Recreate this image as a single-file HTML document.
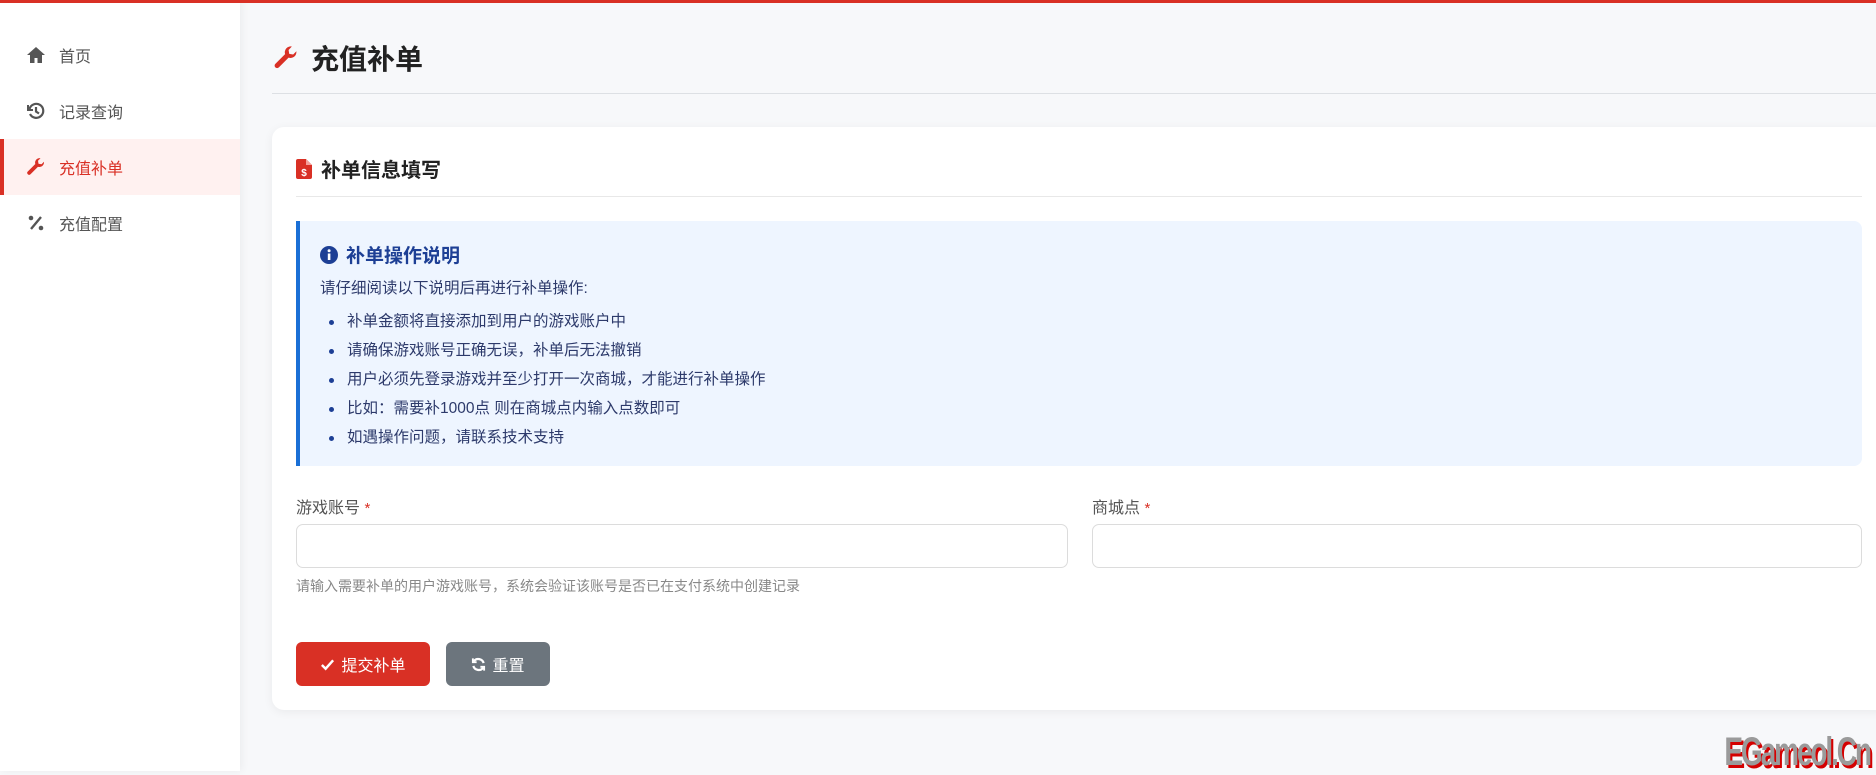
<!DOCTYPE html>
<html><head><meta charset="utf-8">
<style>
*{box-sizing:border-box;margin:0;padding:0}
body{width:1876px;height:771px;overflow:hidden;background:#f7f8fa;font-family:"Liberation Sans","Noto Sans CJK SC",sans-serif;position:relative}
.topbar{position:absolute;left:0;top:0;width:1876px;height:3px;background:#d93025;z-index:5}
.side{position:absolute;left:0;top:0;width:240px;height:771px;background:#fff;box-shadow:2px 0 8px rgba(0,0,0,.05);padding-top:27px}
.nav{height:56px;display:flex;align-items:center;padding-left:26px;font-size:16px;color:#555;position:relative}
.nav svg{width:20px;height:20px;margin-right:13px}
.nav.active{background:#fff1f0;color:#d93025}
.nav.active:before{content:"";position:absolute;left:0;top:0;bottom:0;width:4px;background:#d93025}
.title{position:absolute;left:273px;top:38px;display:flex;align-items:center;font-size:28px;font-weight:bold;color:#222}
.title svg{width:26px;height:26px;margin-right:12px}
.hr{position:absolute;left:272px;right:0;top:93px;height:1px;background:#dde0e4}
.card{position:absolute;left:272px;top:127px;width:1620px;height:583px;background:#fff;border-radius:12px;box-shadow:0 2px 10px rgba(0,0,0,.06)}
.ch{position:absolute;left:24px;top:27px;display:flex;align-items:center;font-size:20px;font-weight:bold;color:#222}
.ch svg{width:16px;height:20px;margin-right:9px}
.cdiv{position:absolute;left:24px;width:1566px;top:69px;height:1px;background:#e8e8e8}
.alert{position:absolute;left:24px;top:94px;width:1566px;height:245px;background:#eef5ff;border-left:4px solid #1a6fd6;border-radius:0 8px 8px 0}
.at{position:absolute;left:20px;top:20px;display:flex;align-items:center;font-size:19px;font-weight:bold;color:#1d3f95}
.at svg{width:18px;height:18px;margin-right:8px}
.intro{position:absolute;left:20px;top:55px;font-size:15.5px;color:#2d3a6b}
.alert ul{position:absolute;left:28px;top:86px;list-style:none}
.alert li{font-size:15.5px;color:#2d3a6b;height:29px;line-height:29px;position:relative;padding-left:19px}
.alert li:before{content:"";position:absolute;left:1px;top:13px;width:5px;height:5px;border-radius:50%;background:#1d3f95}
.lbl{position:absolute;top:367px;font-size:16px;color:#555}
.lbl b{color:#d93025;font-weight:normal;font-size:15px}
.inp{position:absolute;top:397px;height:44px;border:1px solid #dcdcdc;border-radius:7px;background:#fff}
.help{position:absolute;left:24px;top:449px;font-size:14px;color:#888}
.btn{position:absolute;top:515px;height:44px;border-radius:6px;color:#fff;font-size:16px;display:flex;align-items:center;justify-content:center}
.btn svg{width:15px;height:15px;margin-right:6px}
.wm{position:absolute;right:6px;bottom:-4px;font-family:"Liberation Sans Narrow","Liberation Sans",sans-serif;font-weight:bold;font-size:40px;letter-spacing:-3px;color:#9a9a9a;text-shadow:3px 3px 0 #d40000;transform:scaleX(.7);transform-origin:right bottom;white-space:nowrap}
</style></head><body>
<div class="topbar"></div>
<div class="side">
 <div class="nav"><svg viewBox="0 0 20 20"><path d="M10 2 1 10h3v8h4.5v-5h3v5H16v-8h3z" fill="#555"/></svg>首页</div>
 <div class="nav"><svg viewBox="0 0 20 20" fill="none" stroke="#555" stroke-width="2.2"><path d="M3.5 8A7 7 0 1 1 4 13"/><path d="M2 4v5h5" stroke-width="2" fill="none"/><path d="M10 6v4.5l3 2"/></svg>记录查询</div>
 <div class="nav active"><svg viewBox="0 0 20 20"><path d="M18 5.5a4.5 4.5 0 0 1-6 4.2L4.5 17.2a1.9 1.9 0 0 1-2.7-2.7L9.3 7A4.5 4.5 0 0 1 14.5 1.2L12 3.8l.5 3 3 .5 2.5-2.5z" fill="#d93025"/></svg>充值补单</div>
 <div class="nav"><svg viewBox="0 0 20 20"><circle cx="5" cy="5" r="2.3" fill="#555"/><circle cx="15" cy="15" r="2.3" fill="#555"/><path d="M15 4 5 16" stroke="#555" stroke-width="2.4"/></svg>充值配置</div>
</div>
<div class="title"><svg viewBox="0 0 20 20"><path d="M18 5.5a4.5 4.5 0 0 1-6 4.2L4.5 17.2a1.9 1.9 0 0 1-2.7-2.7L9.3 7A4.5 4.5 0 0 1 14.5 1.2L12 3.8l.5 3 3 .5 2.5-2.5z" fill="#d93025"/></svg>充值补单</div>
<div class="hr"></div>
<div class="card">
 <div class="ch"><svg viewBox="0 0 16 20"><path d="M0 2a2 2 0 0 1 2-2h8l6 6v12a2 2 0 0 1-2 2H2a2 2 0 0 1-2-2z" fill="#d93025"/><path d="M10 0v6h6" fill="#f3a09a"/><text x="8" y="17" font-size="10" fill="#fff" text-anchor="middle" font-weight="bold" font-family="Liberation Sans">$</text></svg>补单信息填写</div>
 <div class="cdiv"></div>
 <div class="alert">
  <div class="at"><svg viewBox="0 0 18 18"><circle cx="9" cy="9" r="9" fill="#1d3f95"/><rect x="7.8" y="7.5" width="2.6" height="6.5" fill="#fff"/><circle cx="9.1" cy="4.8" r="1.5" fill="#fff"/></svg>补单操作说明</div>
  <div class="intro">请仔细阅读以下说明后再进行补单操作:</div>
  <ul>
   <li>补单金额将直接添加到用户的游戏账户中</li>
   <li>请确保游戏账号正确无误，补单后无法撤销</li>
   <li>用户必须先登录游戏并至少打开一次商城，才能进行补单操作</li>
   <li>比如：需要补1000点 则在商城点内输入点数即可</li>
   <li>如遇操作问题，请联系技术支持</li>
  </ul>
 </div>
 <div class="lbl" style="left:24px">游戏账号 <b>*</b></div>
 <div class="lbl" style="left:820px">商城点 <b>*</b></div>
 <div class="inp" style="left:24px;width:772px"></div>
 <div class="inp" style="left:820px;width:770px"></div>
 <div class="help">请输入需要补单的用户游戏账号，系统会验证该账号是否已在支付系统中创建记录</div>
 <div class="btn" style="left:24px;width:134px;background:#d93025"><svg viewBox="0 0 16 16"><path d="M2 8.5 6 12.5 14 3.5" stroke="#fff" stroke-width="2.6" fill="none"/></svg>提交补单</div>
 <div class="btn" style="left:174px;width:104px;background:#6c757d"><svg viewBox="0 0 16 16" fill="none" stroke="#fff" stroke-width="2.4"><path d="M13.5 6.5A6 6 0 0 0 3 4.5"/><path d="M2.5 9.5A6 6 0 0 0 13 11.5"/><path d="M2 1.5v4h4" stroke-width="2"/><path d="M14 14.5v-4h-4" stroke-width="2"/></svg>重置</div>
</div>
<div class="wm">EGameol.Cn</div>
</body></html>
